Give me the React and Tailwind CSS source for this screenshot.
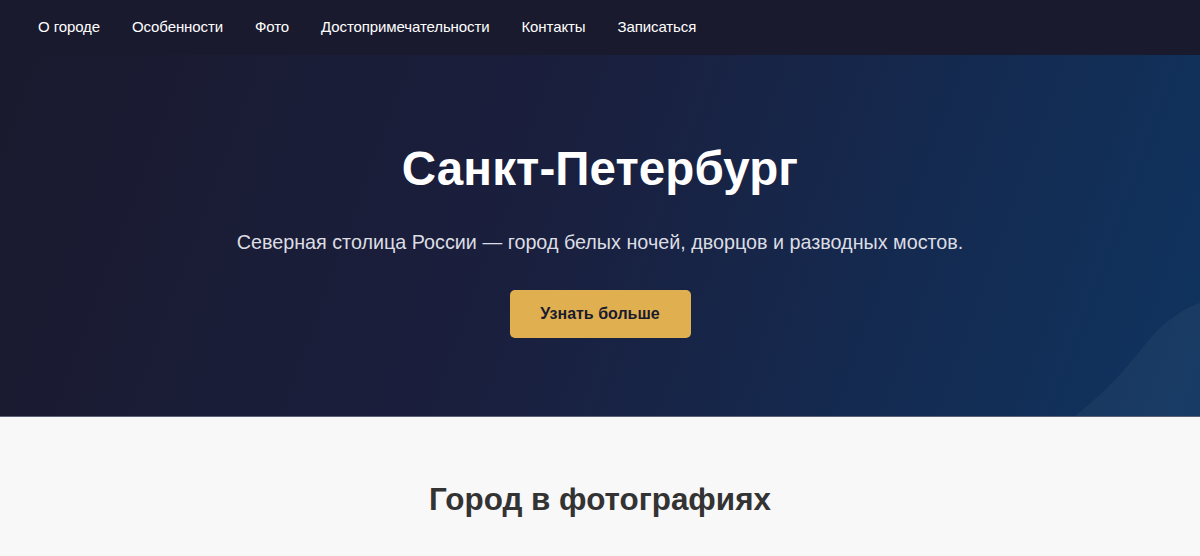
import React from "react";

const links = ["О городе", "Особенности", "Фото", "Достопримечательности", "Контакты", "Записаться"];

const App = () => {
  return (
    <div className="min-h-screen bg-[#f8f8f8] font-['Liberation_Sans',Arial,sans-serif]">
      {/* Nav */}
      <nav className="h-[55px] bg-[#1a1a2e] flex items-center px-[38px]">
        <ul className="flex items-center gap-[32px]">
          {links.map((l) => (
            <li key={l} className="text-white text-[15px] tracking-[-0.1px]">
              {l}
            </li>
          ))}
        </ul>
      </nav>

      {/* Hero */}
      <section className="relative h-[362px] overflow-hidden bg-[linear-gradient(110deg,#1a1a2e_0%,#1a1f3e_45%,#0f3460_100%)] border-b border-[#5a6275] flex flex-col items-center pt-[90px]">
        <svg
          className="absolute right-0 bottom-0"
          width="125"
          height="115"
          viewBox="0 0 125 115"
        >
          <path
            d="M0 115 C25 95 40 80 55 62 C70 45 80 28 100 15 C110 8 118 4 125 2 L125 115 Z"
            fill="#ffffff"
            fillOpacity="0.04"
          />
        </svg>
        <h1 className="text-white font-bold text-[47.5px] leading-none tracking-[0.1px]">
          Санкт-Петербург
        </h1>
        <p className="mt-[40px] text-[#dcdde3] text-[19.75px] leading-none">
          Северная столица России — город белых ночей, дворцов и разводных мостов.
        </p>
        <button className="mt-[38px] w-[181px] h-[48px] rounded-[5px] bg-[#e0b050] text-[#1a1a2e] font-bold text-[16px]">
          Узнать больше
        </button>
      </section>

      {/* Gallery heading */}
      <section className="pt-[67px] flex justify-center">
        <h2 className="text-[#333] font-bold text-[31.4px] leading-none">Город в фотографиях</h2>
      </section>
    </div>
  );
};

export default App;
